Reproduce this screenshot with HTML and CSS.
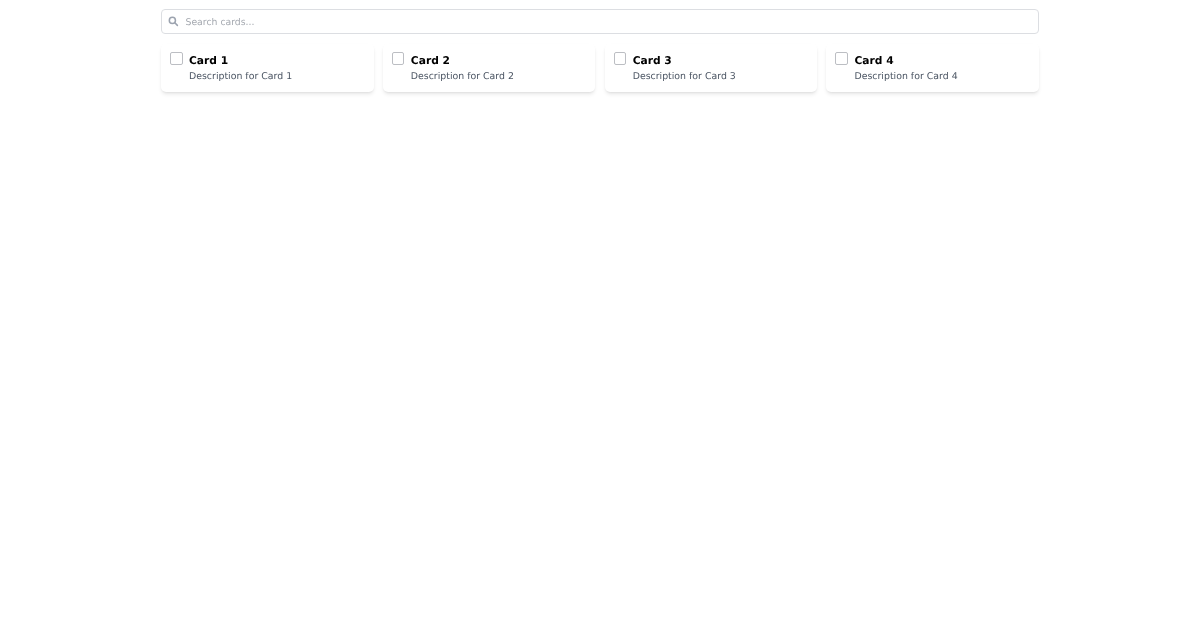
FILE: index.html
```html
<!DOCTYPE html>
<html lang="en">
<head>
    <meta charset="UTF-8">
    <meta name="viewport" content="width=device-width, initial-scale=1.0">
    <title>Cards</title>
    <link rel="stylesheet" href="styles.css">
</head>
<body>
    <div class="container">
        <div class="search">
            <svg class="search-icon" viewBox="0 0 24 24" fill="none" stroke="currentColor" stroke-width="3.5" stroke-linecap="round">
                <circle cx="10" cy="10" r="7"></circle>
                <path d="M15.5 15.5 21.5 21.5"></path>
            </svg>
            <input type="text" class="search-input" placeholder="Search cards...">
        </div>
        <div class="card-grid">
            <div class="card">
                <input type="checkbox" class="card-check">
                <div class="card-body">
                    <div class="card-title">Card 1</div>
                    <div class="card-desc">Description for Card 1</div>
                </div>
            </div>
            <div class="card">
                <input type="checkbox" class="card-check">
                <div class="card-body">
                    <div class="card-title">Card 2</div>
                    <div class="card-desc">Description for Card 2</div>
                </div>
            </div>
            <div class="card">
                <input type="checkbox" class="card-check">
                <div class="card-body">
                    <div class="card-title">Card 3</div>
                    <div class="card-desc">Description for Card 3</div>
                </div>
            </div>
            <div class="card">
                <input type="checkbox" class="card-check">
                <div class="card-body">
                    <div class="card-title">Card 4</div>
                    <div class="card-desc">Description for Card 4</div>
                </div>
            </div>
        </div>
    </div>
</body>
</html>
```

FILE: styles.css
```css
body {
    font-family: "DejaVu Sans", sans-serif;
    margin: 0;
    padding: 0;
    background-color: #fff;
    color: #000;
    text-rendering: geometricPrecision;
}
.container {
    width: 878px;
    min-height: 100vh;
    margin: 0 auto;
    padding-top: 9px;
    box-sizing: border-box;
    will-change: transform;
}
.search {
    display: flex;
    align-items: center;
    gap: 7px;
    height: 25px;
    padding: 0 6px;
    border: 1px solid #dcdee2;
    border-radius: 4px;
    box-sizing: border-box;
    background-color: #fff;
}
.search-icon {
    width: 10.5px;
    height: 10.5px;
    color: #9ca3af;
    flex-shrink: 0;
}
.search-input {
    flex: 1;
    border: none;
    outline: none;
    padding: 1px 0 0;
    font-family: inherit;
    font-size: 9.3px;
    text-rendering: geometricPrecision;
    color: #111827;
}
.search-input::placeholder {
    color: #a5a9b0;
}
.card-grid {
    display: grid;
    grid-template-columns: repeat(4, 1fr);
    gap: 9.33px;
    margin-top: 10px;
}
.card {
    display: flex;
    gap: 6.5px;
    height: 48px;
    padding: 8px 9px;
    box-sizing: border-box;
    background-color: #fff;
    border-radius: 5px;
    box-shadow: 0 3px 4px -1px rgba(0, 0, 0, 0.1), 0 1px 3px -1px rgba(0, 0, 0, 0.1);
}
.card-check {
    appearance: none;
    width: 12.5px;
    height: 12.5px;
    margin: 0;
    flex-shrink: 0;
    border: 1px solid #bcbec3;
    border-radius: 2px;
    background-color: #fff;
}
.card-title {
    margin-top: 2px;
    font-size: 10.7px;
    line-height: 13px;
    font-weight: bold;
}
.card-desc {
    margin-top: 4px;
    font-size: 9.4px;
    line-height: 12px;
    color: #4b5563;
}
```
